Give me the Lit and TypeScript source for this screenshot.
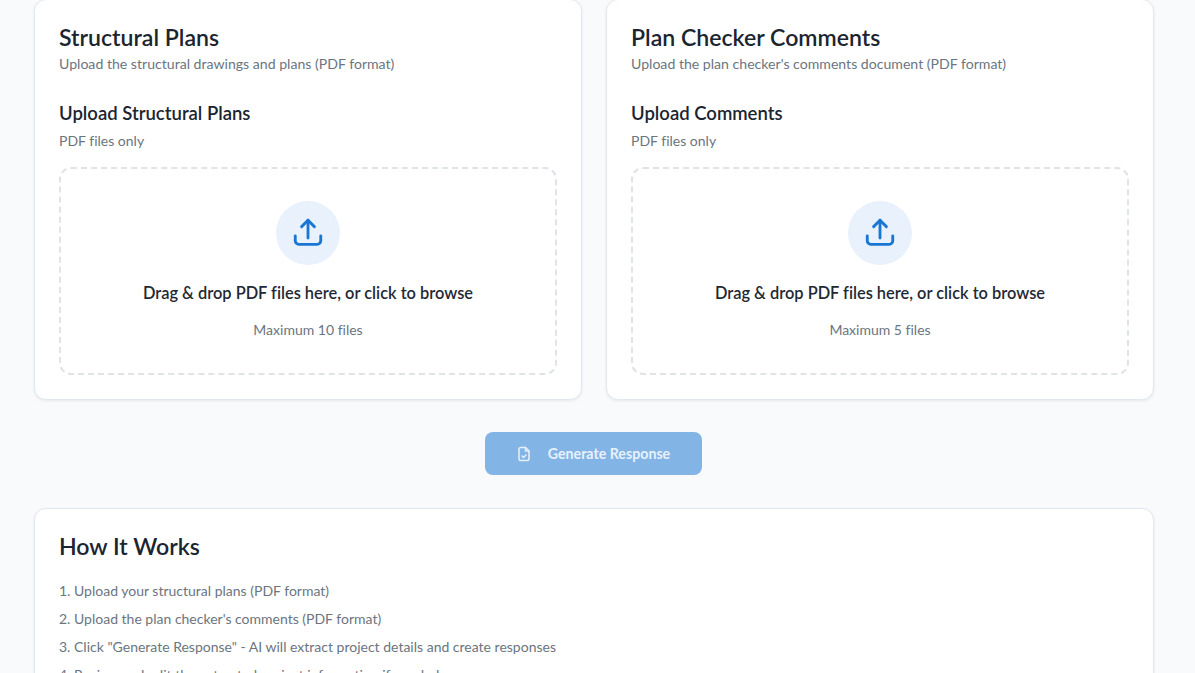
import { css, html, LitElement, svg } from "lit";
import { customElement } from "lit/decorators.js";

const uploadIcon = svg`<path d="M3 14v3.5a2.5 2.5 0 0 0 2.5 2.5h13a2.5 2.5 0 0 0 2.5-2.5V14"/><path d="M12 15.5V3"/><path d="M7.5 7.5L12 3l4.5 4.5"/>`;

const steps = [
  "1. Upload your structural plans (PDF format)",
  "2. Upload the plan checker's comments (PDF format)",
  '3. Click "Generate Response" - AI will extract project details and create responses',
  "4. Review and edit the extracted project information if needed",
];

@customElement("app-root")
export class AppRoot extends LitElement {
  static styles = css`
    :host {
      display: block;
      height: 673px;
      overflow: hidden;
      background: #f8fafc;
      font-family: Lato, "Noto Sans", sans-serif;
      font-variant-ligatures: none;
      color: #1f2933;
    }

    .page {
      width: 1120px;
      margin: -1px 0 0 34px;
    }

    .columns {
      display: grid;
      grid-template-columns: 548px 548px;
      column-gap: 24px;
    }

    .card {
      background: #ffffff;
      border: 1px solid #e2e8f0;
      border-radius: 12px;
      box-shadow: 0 1px 3px rgba(15, 23, 42, 0.08);
      padding: 24px;
    }

    .columns .card {
      height: 401px;
      box-sizing: border-box;
    }

    h2 {
      margin: -1px 0 0;
      font-size: 23.1px;
      line-height: 28px;
      font-weight: 600;
      color: #1b2530;
    }

    .subtitle {
      margin: 3px 0 0;
      font-size: 14.1px;
      line-height: 20px;
      color: #6b7580;
    }

    h3 {
      margin: 26px 0 0;
      font-size: 18.5px;
      line-height: 26px;
      font-weight: 600;
      color: #1b2530;
    }

    .hint {
      margin: 5px 0 0;
      font-size: 14px;
      line-height: 20px;
      color: #6b7580;
    }

    .drop {
      margin-top: 16px;
      height: 208px;
      box-sizing: border-box;
      border: 2px dashed #e0e3e8;
      border-radius: 12px;
      display: flex;
      flex-direction: column;
      align-items: center;
      padding-top: 32px;
    }

    .circle {
      width: 64px;
      height: 64px;
      border-radius: 50%;
      background: #e8f1fc;
      display: flex;
      align-items: center;
      justify-content: center;
    }

    .circle svg {
      width: 34px;
      height: 34px;
      fill: none;
      stroke: #1976d2;
      stroke-width: 2;
      stroke-linecap: round;
      stroke-linejoin: round;
    }

    .drop-title {
      margin-top: 16px;
      font-size: 16.4px;
      line-height: 24px;
      font-weight: 600;
      color: #1f2933;
    }

    .drop-limit {
      margin-top: 15px;
      font-size: 14px;
      line-height: 20px;
      color: #6b7580;
    }

    .actions {
      display: flex;
      justify-content: center;
      padding: 32px 2px 33px 0;
    }

    .generate {
      width: 217px;
      height: 43px;
      border: 0;
      border-radius: 8px;
      background: #82b4e6;
      color: #e8f1fb;
      font: 700 14.2px Lato, "Noto Sans", sans-serif;
      font-variant-ligatures: none;
      display: flex;
      align-items: center;
      justify-content: center;
      gap: 16px;
      padding: 0;
    }

    .generate svg {
      width: 16px;
      height: 16px;
      fill: none;
      stroke: #e8f1fb;
      stroke-width: 1.5;
      stroke-linecap: round;
      stroke-linejoin: round;
    }

    .how {
      height: 260px;
    }

    .how h2 {
      margin-bottom: 21px;
    }

    .how p {
      margin: 0 0 8px;
      font-size: 14px;
      line-height: 20px;
      color: #6b7580;
    }
  `;

  private renderCard(title: string, subtitle: string, heading: string, limit: string) {
    return html`
      <section class="card">
        <h2>${title}</h2>
        <p class="subtitle">${subtitle}</p>
        <h3>${heading}</h3>
        <p class="hint">PDF files only</p>
        <div class="drop">
          <div class="circle"><svg viewBox="0 0 24 24">${uploadIcon}</svg></div>
          <div class="drop-title">Drag &amp; drop PDF files here, or click to browse</div>
          <div class="drop-limit">${limit}</div>
        </div>
      </section>
    `;
  }

  render() {
    return html`
      <div class="page">
        <div class="columns">
          ${this.renderCard(
            "Structural Plans",
            "Upload the structural drawings and plans (PDF format)",
            "Upload Structural Plans",
            "Maximum 10 files",
          )}
          ${this.renderCard(
            "Plan Checker Comments",
            "Upload the plan checker's comments document (PDF format)",
            "Upload Comments",
            "Maximum 5 files",
          )}
        </div>
        <div class="actions">
          <button class="generate">
            <svg viewBox="0 0 16 16">
              <path d="M9.5 1.5H4.5a1.5 1.5 0 0 0-1.5 1.5v10a1.5 1.5 0 0 0 1.5 1.5h7a1.5 1.5 0 0 0 1.5-1.5V5z" />
              <path d="M9.5 1.5V5H13" />
              <path d="M6 10l1.5 1.5L10 9" />
            </svg>
            Generate Response
          </button>
        </div>
        <section class="card how">
          <h2>How It Works</h2>
          ${steps.map((step) => html`<p>${step}</p>`)}
        </section>
      </div>
    `;
  }
}

declare global {
  interface HTMLElementTagNameMap {
    "app-root": AppRoot;
  }
}
